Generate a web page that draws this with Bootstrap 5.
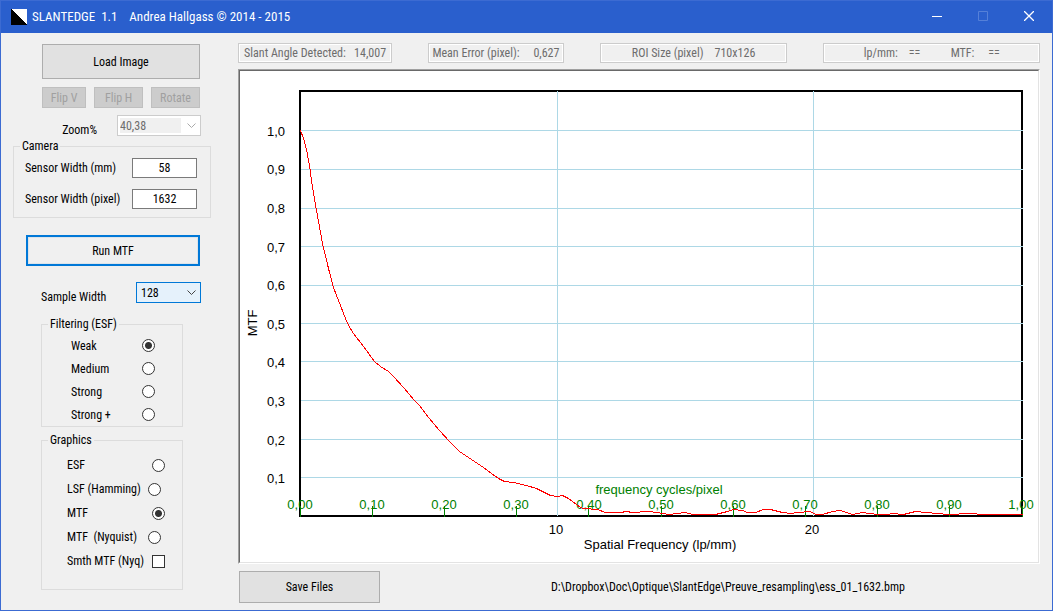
<!DOCTYPE html>
<html lang="en">
<head>
<meta charset="utf-8">
<meta name="viewport" content="width=device-width, initial-scale=1">
<title>SLANTEDGE 1.1</title>
<link href="https://cdn.jsdelivr.net/npm/bootstrap@5.3.0/dist/css/bootstrap.min.css" rel="stylesheet">
<style>
  body { font: 12px/16px "Roboto Condensed", Roboto, "Liberation Sans", sans-serif; color: #000; background: #f0f0f0; }
  .app-window { border: 1px solid #3c6bd2; min-height: 100vh; }
  .title-bar { background: #2a5fcd; color: #fff; height: 32px; font-size: 13px; white-space: pre; }
  .title-bar button { width: 46px; height: 32px; border: 0; background: none; color: #fff; padding: 0; }
  .title-bar button:disabled { color: #5580d8; }
  .title-bar button svg { display: block; margin: 0 auto 2px; }
  .app-icon { margin: 0 5px 0 10px; }
  .side-panel { width: 237px; padding: 11px 0 20px; }
  .btn-win { --bs-btn-font-size: 12px; --bs-btn-line-height: 16px; --bs-btn-border-radius: 0; --bs-btn-padding-x: 0; --bs-btn-padding-y: 0;
    --bs-btn-bg: #e1e1e1; --bs-btn-border-color: #adadad; --bs-btn-color: #000; --bs-btn-hover-bg: #e5f1fb; --bs-btn-hover-border-color: #0078d7; --bs-btn-hover-color: #000;
    --bs-btn-disabled-bg: #ccc; --bs-btn-disabled-border-color: #bfbfbf; --bs-btn-disabled-color: #a0a0a0; --bs-btn-disabled-opacity: 1; }
  .btn-run { border: 2px solid #0078d7; background: #f0f0f0; box-shadow: inset 0 0 0 1px #dde4ea; height: 31px; margin: 17px 38px 0 25px; }
  .tool-group { margin: 0 38px 0 41px; }
  .select-group { margin: 0 37px 0 40px; }
  .select-group label { margin-bottom: -2px; }
  .zoom-group { margin-top: 7px; gap: 20px; }
  .btn-load { height: 35px; }
  .btn-tool { height: 21px; flex: 49 1 0; }
  .btn-tool:first-child { flex-grow: 44; }
  .field-select { appearance: none; height: 21px; font-size: 12px; line-height: 16px; border: 1px solid #0078d7; border-radius: 0; padding: 0 4px; color: #000;
    background: #e5f1fb url("data:image/svg+xml,%3Csvg xmlns='http://www.w3.org/2000/svg' width='9' height='6'%3E%3Cpath d='M.5 .5l4 4 4-4' fill='none' stroke='%23444'/%3E%3C/svg%3E") no-repeat right 4px center; }
  .field-select:disabled { opacity: 1; color: #6d6d6d; border-color: #ccc; padding: 0 2px;
    background: url("data:image/svg+xml,%3Csvg xmlns='http://www.w3.org/2000/svg' width='9' height='6'%3E%3Cpath d='M.5 .5l4 4 4-4' fill='none' stroke='%23aaa'/%3E%3C/svg%3E") no-repeat right 4px center, linear-gradient(#f0f0f0, #f0f0f0) 2px 2px / 61px 15px no-repeat, #fff; }
  .select-zoom { width: 84px; }
  .select-sample { width: 65px; }
  .group-frame { border: 1px solid #dcdcdc; }
  .group-frame legend { float: none; width: auto; font-size: 12px; line-height: 16px; margin: 0 0 0 6px; padding: 0 2px; background: #f0f0f0; }
  .frame-camera { margin: 2px 27px 0 12px; height: 80px; }
  .frame-filter { margin: 13px 55px 0 40px; padding-top: 2px; }
  .frame-graphics { margin: 5px 55px 0 40px; padding: 5px 0 16px; }
  .input-plain { width: 65px; height: 20px; border: 1px solid #7a7a7a; background: #fff; padding: 0; color: #000; }
  .camera-row { padding: 0 13px 0 11px; margin-top: 4px; }
  .camera-row + .camera-row { margin-top: 11px; }
  .filter-row { height: 23px; padding: 0 27px 0 29px; }
  .graphics-row { height: 24px; padding: 0 17px 0 25px; }
  .mark-box { appearance: none; width: 13px; height: 13px; margin: 0; border: 1px solid #333; background: #fff; }
  .mark-box[type=radio] { border-radius: 50%; }
  .mark-box[type=radio]:checked { background: radial-gradient(circle, #333 3px, #fff 4px); }
  .view-panel { padding: 10px 12px 0 0; min-width: 0; }
  .readouts { gap: 36px; }
  .readout { height: 20px; min-width: 0; border: 1px solid #ccc; background: #f0f0f0; box-shadow: inset 0 0 0 1px #fff; color: #6d6d6d; text-align: center; padding: 0; }
  .readout-angle { flex: 154 1 0; } .readout-error { flex: 135 1 0; } .readout-roi { flex: 188 1 0; } .readout-cursor { flex: 217 1 0; }
  .plot-frame { margin-top: 6px; border: 1px solid; border-color: #a0a0a0 #fff #fff #a0a0a0; }
  .plot-inner { border: 1px solid; border-color: #696969 #e3e3e3 #e3e3e3 #696969; background: #fff; }
  .plot { display: block; width: 100%; height: auto; font: 13px "Liberation Sans", Arial, sans-serif; }
  .file-bar { margin-top: 7px; }
  .file-path { padding-left: 36px; }
  .btn-save { width: 141px; height: 32px; margin-left: 1px; }
</style>
</head>
<body>
<div class="app-window">
  <header class="title-bar d-flex align-items-center">
    <svg class="app-icon" width="16" height="16" viewBox="0 0 16 16" shape-rendering="crispEdges" aria-hidden="true"><path fill="#fff" d="M0 0h16v16z"/><path d="M0 0v16h16z"/></svg>
    <span class="flex-grow-1">SLANTEDGE  1.1    Andrea Hallgass © 2014 - 2015</span>
    <button type="button" aria-label="Minimize"><svg width="10" height="10"><path d="M0 5h10v1H0z" fill="currentColor"/></svg></button><button type="button" disabled aria-label="Maximize"><svg width="10" height="10"><path d="M.5 .5h9v9h-9z" fill="none" stroke="currentColor"/></svg></button><button type="button" aria-label="Close"><svg width="10" height="10"><path d="M0 0l10 10M10 0L0 10" stroke="currentColor" stroke-width="1.3"/></svg></button>
  </header>
  <main class="d-flex">
    <form class="side-panel d-flex flex-column flex-shrink-0">
      <div class="tool-group d-flex flex-column gap-2">
        <button type="button" class="btn btn-win btn-load">Load Image</button>
        <div class="d-flex gap-2">
          <button type="button" class="btn btn-win btn-tool" disabled>Flip V</button>
          <button type="button" class="btn btn-win btn-tool" disabled>Flip H</button>
          <button type="button" class="btn btn-win btn-tool" disabled>Rotate</button>
        </div>
      </div>
      <div class="select-group zoom-group d-flex justify-content-end align-items-end">
        <label for="zoom">Zoom%</label>
        <select id="zoom" class="field-select select-zoom" disabled><option>40,38</option></select>
      </div>
      <fieldset class="group-frame frame-camera">
        <legend>Camera</legend>
        <div class="camera-row d-flex align-items-center justify-content-between"><label for="mm">Sensor Width (mm)</label><input id="mm" class="input-plain text-center" value="58"></div>
        <div class="camera-row d-flex align-items-center justify-content-between"><label for="px">Sensor Width (pixel)</label><input id="px" class="input-plain text-center" value="1632"></div>
      </fieldset>
      <button type="button" class="btn btn-win btn-run">Run MTF</button>
      <div class="select-group d-flex justify-content-between align-items-end mt-3">
        <label for="sample">Sample Width</label>
        <select id="sample" class="field-select select-sample"><option>128</option></select>
      </div>
      <fieldset class="group-frame frame-filter">
        <legend>Filtering (ESF)</legend>
        <div class="filter-row d-flex align-items-center justify-content-between"><label for="f1">Weak</label><input id="f1" class="mark-box" type="radio" name="esf" checked></div>
        <div class="filter-row d-flex align-items-center justify-content-between"><label for="f2">Medium</label><input id="f2" class="mark-box" type="radio" name="esf"></div>
        <div class="filter-row d-flex align-items-center justify-content-between"><label for="f3">Strong</label><input id="f3" class="mark-box" type="radio" name="esf"></div>
        <div class="filter-row d-flex align-items-center justify-content-between"><label for="f4">Strong +</label><input id="f4" class="mark-box" type="radio" name="esf"></div>
      </fieldset>
      <fieldset class="group-frame frame-graphics">
        <legend>Graphics</legend>
        <div class="graphics-row d-flex align-items-center justify-content-between"><label for="g1">ESF</label><input id="g1" class="mark-box" type="radio" name="graph"></div>
        <div class="graphics-row d-flex align-items-center justify-content-between"><label for="g2">LSF (Hamming)</label><input id="g2" class="mark-box me-1" type="radio" name="graph"></div>
        <div class="graphics-row d-flex align-items-center justify-content-between"><label for="g3">MTF</label><input id="g3" class="mark-box" type="radio" name="graph" checked></div>
        <div class="graphics-row d-flex align-items-center justify-content-between"><label for="g4">MTF &nbsp;(Nyquist)</label><input id="g4" class="mark-box me-1" type="radio" name="graph"></div>
        <div class="graphics-row d-flex align-items-center justify-content-between"><label for="g5">Smth MTF (Nyq)</label><input id="g5" class="mark-box" type="checkbox"></div>
      </fieldset>
    </form>
    <section class="view-panel flex-grow-1">
      <div class="readouts d-flex">
        <input class="readout readout-angle" aria-label="Slant angle" disabled value="Slant Angle Detected:   14,007">
        <input class="readout readout-error" aria-label="Mean error" disabled value="Mean Error (pixel):     0,627">
        <input class="readout readout-roi" aria-label="ROI size" disabled value="ROI Size (pixel)    710x126">
        <input class="readout readout-cursor" aria-label="Cursor values" disabled value="lp/mm:    ==           MTF:     ==">
      </div>
      <div class="plot-frame"><div class="plot-inner">
        <svg class="plot" viewBox="240 71 798 491" role="img" aria-label="MTF against spatial frequency">
          <g shape-rendering="crispEdges">
            <rect x="300" y="91" width="722" height="425" fill="none" stroke="#000" stroke-width="2"/>
            <path fill="#add8e6" d="M301 130h722v1H301zM301 169h722v1H301zM301 208h722v1H301zM301 246h722v1H301zM301 285h722v1H301zM301 323h722v1H301zM301 361h722v1H301zM301 400h722v1H301zM301 439h722v1H301zM301 477h722v1H301zM557 91h1v425h-1zM813 91h1v425h-1z"/>
            <path fill="green" d="M300 506h1v11h-1zM372 506h1v11h-1zM444 506h1v11h-1zM516 506h1v11h-1zM588 506h1v11h-1zM661 506h1v11h-1zM733 506h1v11h-1zM805 506h1v11h-1zM877 506h1v11h-1zM949 506h1v11h-1zM1022 506h1v11h-1z"/>
          </g>
          <g text-anchor="end">
            <text x="285" y="136">1,0</text><text x="285" y="174">0,9</text><text x="285" y="213">0,8</text><text x="285" y="252">0,7</text><text x="285" y="290">0,6</text><text x="285" y="329">0,5</text><text x="285" y="367">0,4</text><text x="285" y="406">0,3</text><text x="285" y="445">0,2</text><text x="285" y="483">0,1</text>
          </g>
          <g text-anchor="middle">
            <text x="556" y="534">10</text><text x="812" y="534">20</text>
            <text x="660" y="549">Spatial Frequency (lp/mm)</text>
            <text transform="translate(257 323) rotate(-90)">MTF</text>
          </g>
          <g text-anchor="middle" fill="green">
            <text x="659" y="494">frequency cycles/pixel</text>
            <text x="300" y="509">0,00</text><text x="372" y="509">0,10</text><text x="444" y="509">0,20</text><text x="516" y="509">0,30</text><text x="589" y="509">0,40</text><text x="661" y="509">0,50</text><text x="733" y="509">0,60</text><text x="805" y="509">0,70</text><text x="877" y="509">0,80</text><text x="949" y="509">0,90</text><text x="1021" y="509">1,00</text>
          </g>
          <polyline transform="translate(.5 .5)" shape-rendering="crispEdges" fill="none" stroke="red" points="300,130 303,138 306,149 309,165 312,187 316,210 322,243 328,268 333,287 338,300 347,323 353,333 363,346 374,361 380,366 388,371 393,376 403,387 414,400 419,405 428,417 439,430 449,441 459,451 471,459 483,467 491,473 498,478 504,481 513,482 526,485 536,488 550,495 557,496 562,495 568,498 580,507 583,508 597,509 605,512 620,512 626,511 632,512 647,511 657,512 668,514 677,513 685,512 692,514 715,514 727,511 733,509 742,510 747,512 755,512 763,509 770,509 782,512 790,513 797,512 810,511 815,514 822,514 832,511 840,510 852,514 862,512 877,514 887,514 892,513 903,514 915,511 937,513 947,514 970,513 983,514 992,514 1003,514 1022,514"/>
        </svg>
      </div></div>
      <footer class="file-bar d-flex align-items-center">
        <button type="button" class="btn btn-win btn-save">Save Files</button>
        <span class="file-path flex-grow-1 text-center text-break">D:\Dropbox\Doc\Optique\SlantEdge\Preuve_resampling\ess_01_1632.bmp</span>
      </footer>
    </section>
  </main>
</div>
<script src="https://cdn.jsdelivr.net/npm/bootstrap@5.3.0/dist/js/bootstrap.bundle.min.js"></script>
</body>
</html>
